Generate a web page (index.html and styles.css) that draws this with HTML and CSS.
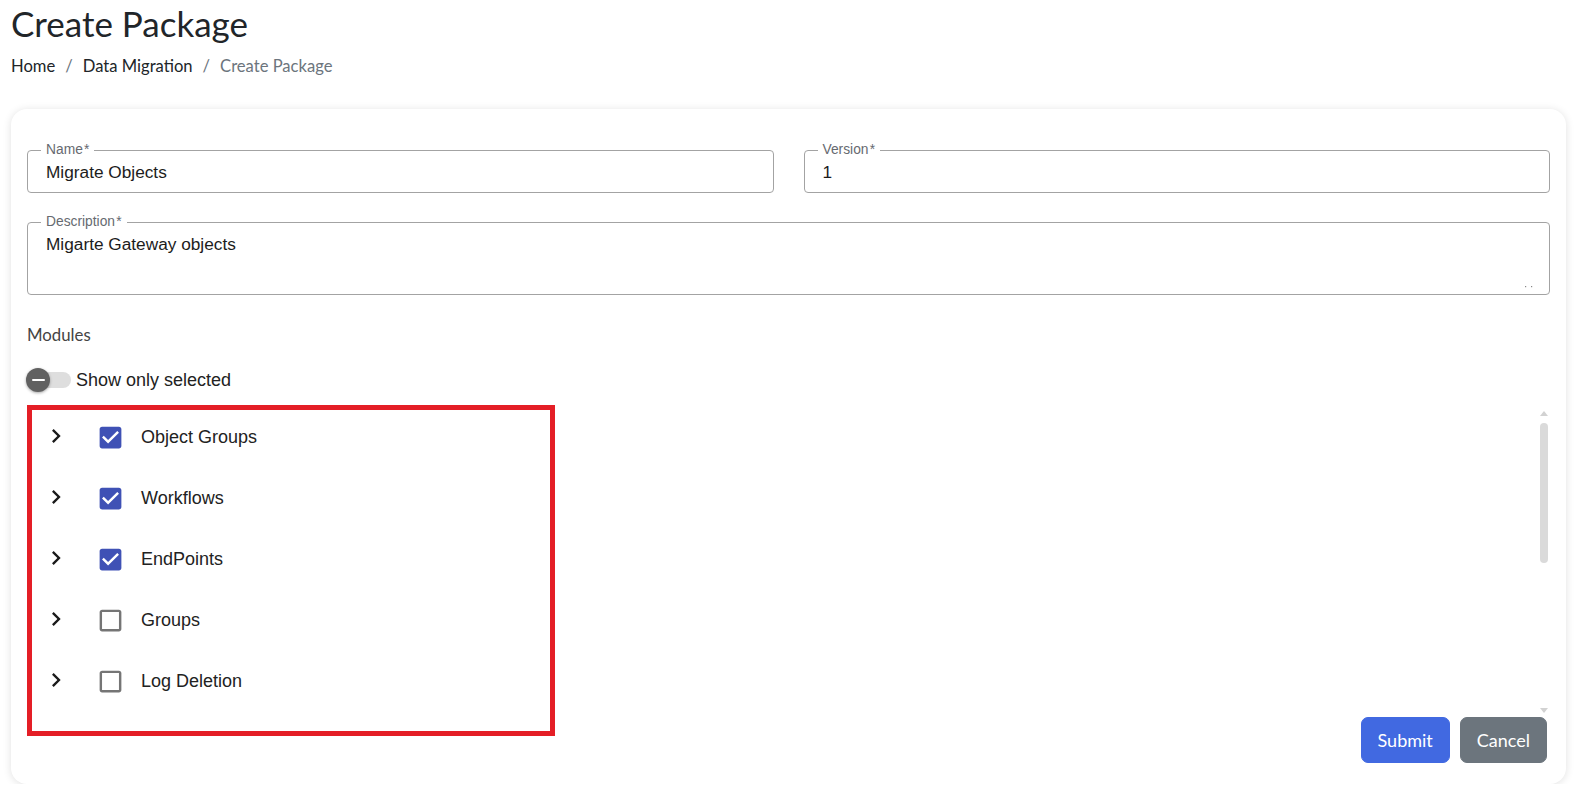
FILE: index.html
```html
<!DOCTYPE html>
<html lang="en">
<head>
<meta charset="utf-8">
<title>Create Package</title>
<link rel="stylesheet" href="styles.css">
</head>
<body>
<div class="page">
  <h1 class="title">Create Package</h1>
  <nav class="crumbs">
    <a class="crumb" href="#">Home</a><span class="sep">/</span><a class="crumb" href="#">Data Migration</a><span class="sep">/</span><span class="crumb current">Create Package</span>
  </nav>

  <div class="card">
    <div class="row2">
      <fieldset class="field">
        <legend>Name&#8202;*</legend>
        <div class="value">Migrate Objects</div>
      </fieldset>
      <fieldset class="field">
        <legend>Version&#8202;*</legend>
        <div class="value">1</div>
      </fieldset>
    </div>

    <fieldset class="field area">
      <legend>Description&#8202;*</legend>
      <div class="value multi">Migarte Gateway objects</div>
      <svg class="grip" width="10" height="3" viewBox="0 0 10 3"><rect x="0" y="1" width="1.2" height="1.2" fill="#888"/><rect x="6" y="1" width="1.2" height="1.2" fill="#888"/></svg>
    </fieldset>

    <div class="modules">Modules</div>

    <div class="toggle">
      <span class="switch"><span class="track"></span><span class="thumb"><span class="minus"></span></span></span>
      <span class="toggle-label">Show only selected</span>
    </div>

    <div class="tree-wrap">
      <div class="tree">
        <div class="node">
          <svg class="chev" viewBox="0 0 24 24"><path d="M10 6 8.59 7.41 13.17 12l-4.58 4.59L10 18l6-6z"/></svg>
          <svg class="cb checked" viewBox="0 0 24 24"><path fill-rule="evenodd" d="M19 3H5c-1.11 0-2 .9-2 2v14c0 1.1.89 2 2 2h14c1.11 0 2-.9 2-2V5c0-1.1-.89-2-2-2zm-9 14l-5-5 1.41-1.41L10 14.17l7.59-7.59L19 8l-9 9z"/></svg>
          <span class="node-label">Object Groups</span>
        </div>
        <div class="node">
          <svg class="chev" viewBox="0 0 24 24"><path d="M10 6 8.59 7.41 13.17 12l-4.58 4.59L10 18l6-6z"/></svg>
          <svg class="cb checked" viewBox="0 0 24 24"><path fill-rule="evenodd" d="M19 3H5c-1.11 0-2 .9-2 2v14c0 1.1.89 2 2 2h14c1.11 0 2-.9 2-2V5c0-1.1-.89-2-2-2zm-9 14l-5-5 1.41-1.41L10 14.17l7.59-7.59L19 8l-9 9z"/></svg>
          <span class="node-label">Workflows</span>
        </div>
        <div class="node">
          <svg class="chev" viewBox="0 0 24 24"><path d="M10 6 8.59 7.41 13.17 12l-4.58 4.59L10 18l6-6z"/></svg>
          <svg class="cb checked" viewBox="0 0 24 24"><path fill-rule="evenodd" d="M19 3H5c-1.11 0-2 .9-2 2v14c0 1.1.89 2 2 2h14c1.11 0 2-.9 2-2V5c0-1.1-.89-2-2-2zm-9 14l-5-5 1.41-1.41L10 14.17l7.59-7.59L19 8l-9 9z"/></svg>
          <span class="node-label">EndPoints</span>
        </div>
        <div class="node">
          <svg class="chev" viewBox="0 0 24 24"><path d="M10 6 8.59 7.41 13.17 12l-4.58 4.59L10 18l6-6z"/></svg>
          <svg class="cb" viewBox="0 0 24 24"><path d="M19 5v14H5V5h14m0-2H5c-1.1 0-2 .9-2 2v14c0 1.1.9 2 2 2h14c1.1 0 2-.9 2-2V5c0-1.1-.9-2-2-2z"/></svg>
          <span class="node-label">Groups</span>
        </div>
        <div class="node">
          <svg class="chev" viewBox="0 0 24 24"><path d="M10 6 8.59 7.41 13.17 12l-4.58 4.59L10 18l6-6z"/></svg>
          <svg class="cb" viewBox="0 0 24 24"><path d="M19 5v14H5V5h14m0-2H5c-1.1 0-2 .9-2 2v14c0 1.1.9 2 2 2h14c1.1 0 2-.9 2-2V5c0-1.1-.9-2-2-2z"/></svg>
          <span class="node-label">Log Deletion</span>
        </div>
      </div>
      <div class="scrollbar" aria-hidden="true">
        <span class="sb-btn"><span class="arrow-up"></span></span>
        <span class="sb-thumb"></span>
        <span class="sb-fill"></span>
        <span class="sb-btn"><span class="arrow-down"></span></span>
      </div>
      <div class="highlight"></div>
    </div>

    <div class="actions">
      <button class="btn btn-primary" type="button">Submit</button>
      <button class="btn btn-secondary" type="button">Cancel</button>
    </div>
  </div>
</div>
</body>
</html>
```

FILE: styles.css
```css
* { box-sizing: border-box; }

html, body {
  margin: 0;
  padding: 0;
  background: #ffffff;
}

body {
  font-family: Lato, "Liberation Sans", Arial, sans-serif;
  color: #212529;
}

.page {
  padding: 2px 12px 0 11px;
}

.title {
  margin: 0;
  font-family: Lato, sans-serif;
  font-weight: 400;
  font-size: 35px;
  line-height: 42px;
  color: #212529;
}

.crumbs {
  margin-top: 10px;
  font-family: Lato, sans-serif;
  font-size: 16.6px;
  line-height: 24px;
  display: flex;
  align-items: center;
}

.crumb {
  color: #212529;
  text-decoration: none;
}

.crumb.current {
  color: #6c757d;
}

.sep {
  color: #6c757d;
  padding: 0 10px;
}

.card {
  margin-top: 31px;
  background: #ffffff;
  border-radius: 16px;
  box-shadow: 0 1px 8px rgba(0, 0, 0, 0.12);
  padding: 34px 16px 21px 16px;
  height: 675px;
}

.row2 {
  display: grid;
  grid-template-columns: 1fr 1fr;
  column-gap: 30px;
}

.field {
  margin: 0;
  min-width: 0;
  border: 1px solid #a3a3a3;
  border-radius: 4px;
  padding: 5px 17px 10px 13px;
  position: relative;
}

.field legend {
  padding: 0 5px;
  font-family: "Liberation Sans", Arial, sans-serif;
  font-size: 13.8px;
  line-height: 14px;
  color: #666a70;
}

.value {
  padding-left: 5px;
  font-family: "Liberation Sans", Arial, sans-serif;
  font-size: 17.25px;
  line-height: 20px;
  color: #1c1c1c;
}

.area {
  margin-top: 22px;
}

.value.multi {
  min-height: 50px;
}

.grip {
  position: absolute;
  right: 14px;
  bottom: 6px;
}

.modules {
  margin-top: 28px;
  font-family: Lato, sans-serif;
  font-size: 16.8px;
  line-height: 24px;
  color: #444444;
}

.toggle {
  margin-top: 16px;
  height: 34px;
  display: flex;
  align-items: center;
}

.switch {
  position: relative;
  width: 44px;
  height: 34px;
  margin-right: 5px;
  flex: none;
}

.track {
  position: absolute;
  left: 4px;
  top: 9px;
  width: 40px;
  height: 16px;
  border-radius: 8px;
  background: #dedede;
}

.thumb {
  position: absolute;
  left: -1px;
  top: 5px;
  width: 24px;
  height: 24px;
  border-radius: 50%;
  background: #616161;
  box-shadow: 0 1px 3px rgba(0, 0, 0, 0.35);
  display: flex;
  align-items: center;
  justify-content: center;
}

.minus {
  width: 13px;
  height: 2px;
  background: #ffffff;
  border-radius: 1px;
}

.toggle-label {
  font-family: "Liberation Sans", Arial, sans-serif;
  font-size: 18px;
  color: #222222;
}

.tree-wrap {
  position: relative;
  margin-top: 10px;
  height: 309px;
  display: flex;
}

.tree {
  flex: 1;
  min-width: 0;
  height: 100%;
  overflow: hidden;
}

.scrollbar {
  width: 12px;
  flex: none;
  display: flex;
  flex-direction: column;
  align-items: center;
}

.sb-btn {
  height: 12px;
  width: 12px;
  flex: none;
  display: flex;
  align-items: center;
  justify-content: center;
}

.arrow-up {
  width: 0;
  height: 0;
  border-left: 4px solid transparent;
  border-right: 4px solid transparent;
  border-bottom: 5px solid #d2d2d2;
}

.arrow-down {
  width: 0;
  height: 0;
  border-left: 4px solid transparent;
  border-right: 4px solid transparent;
  border-top: 5px solid #d2d2d2;
}

.sb-thumb {
  margin-top: 4px;
  width: 8px;
  height: 140px;
  border-radius: 4px;
  background: #dadada;
  flex: none;
}

.sb-fill {
  flex: 1;
}

.node {
  height: 61px;
  display: flex;
  align-items: center;
  padding-left: 15px;
}

.chev {
  width: 28px;
  height: 28px;
  fill: #1a1a1a;
  flex: none;
  margin-top: -3px;
}

.cb {
  width: 29px;
  height: 29px;
  margin-left: 26px;
  fill: #757575;
  flex: none;
}

.cb.checked {
  fill: #3f51b5;
}

.node-label {
  margin-left: 16px;
  font-family: "Liberation Sans", Arial, sans-serif;
  font-size: 18px;
  color: #222222;
}

.highlight {
  position: absolute;
  left: 0;
  top: -2px;
  width: 528px;
  height: 331px;
  border: 5px solid #e41e26;
  pointer-events: none;
}

.actions {
  margin-top: 1px;
  display: flex;
  justify-content: flex-end;
  gap: 10px;
  padding-right: 3px;
}

.btn {
  font-family: Lato, sans-serif;
  font-size: 18px;
  line-height: 28px;
  padding: 8px 16px;
  border: 1px solid transparent;
  border-radius: 7px;
  color: #ffffff;
  cursor: pointer;
}

.btn-primary {
  background: #4169e1;
  border-color: #4169e1;
}

.btn-secondary {
  background: #6c757d;
  border-color: #6c757d;
}
```
